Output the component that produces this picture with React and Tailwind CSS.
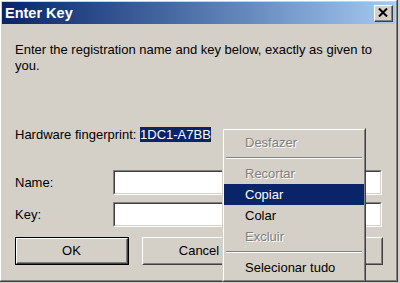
import React from "react";

const raisedBtn =
  "border-t border-l border-t-white border-l-white border-r border-b border-r-[#404040] border-b-[#404040]";

function Button({ children, def }) {
  if (def) {
    return (
      <div className="w-[114px] h-[28px] border border-black">
        <div className="w-full h-full border-t border-l border-t-white border-l-white border-r border-b border-r-[#404040] border-b-[#404040]">
          <div className="w-full h-full border-r border-b border-r-[#808080] border-b-[#808080] flex items-center justify-center text-[13px] text-black">
            {children}
          </div>
        </div>
      </div>
    );
  }
  return (
    <div className={"w-[114px] h-[28px] " + raisedBtn}>
      <div className="w-full h-full border-t border-l border-t-[#d4d0c8] border-l-[#d4d0c8] border-r border-b border-r-[#808080] border-b-[#808080] flex items-center justify-center text-[13px] text-black">
        {children}
      </div>
    </div>
  );
}

function Input() {
  return (
    <div className="w-[269px] h-[25px] border-t border-l border-t-[#808080] border-l-[#808080] border-r border-b border-r-white border-b-white">
      <div className="w-full h-full bg-white border-t border-l border-t-[#404040] border-l-[#404040] border-r border-b border-r-[#d4d0c8] border-b-[#d4d0c8]" />
    </div>
  );
}

function MenuItem({ label, disabled, active }) {
  let cls = "h-[21px] flex items-center pl-[21px] text-[13px] leading-none ";
  if (active) cls += "bg-[#0a246a] text-white";
  else if (disabled) cls += "text-[#808080] [text-shadow:1px_1px_0_#ffffff]";
  else cls += "text-black";
  return <div className={cls}>{label}</div>;
}

function Sep() {
  return (
    <div className="h-[10px] flex flex-col justify-center px-[2px]">
      <div className="h-px bg-[#808080]" />
      <div className="h-px bg-white" />
    </div>
  );
}

export default function App() {
  return (
    <div
      className="w-[400px] h-[283px] bg-[#d4d0c8] relative overflow-hidden"
      style={{ fontFamily: '"Liberation Sans", Arial, sans-serif' }}
    >
      <div className="w-[398px] h-[282px] border-r border-b border-r-[#404040] border-b-[#404040]">
        <div className="w-full h-full border-r border-b border-r-[#808080] border-b-[#808080] border-t border-l border-t-white border-l-white flex flex-col pt-px pl-px pr-px">
          {/* Title bar */}
          <div className="h-[22px] flex items-center justify-between bg-gradient-to-r from-[#0a246a] to-[#a6caf0] pl-[3px] pr-[2px]">
            <span className="text-white font-bold text-[14.5px] leading-none">
              Enter Key
            </span>
            <div className="w-[19px] h-[17px] border-t border-l border-t-white border-l-white border-r border-b border-r-[#404040] border-b-[#404040] bg-[#d4d0c8]">
              <div className="w-full h-full border-r border-b border-r-[#808080] border-b-[#808080] flex items-center justify-center">
                <svg width="10" height="9" viewBox="0 0 10 9">
                  <path d="M1 0.5 L9 8.5 M9 0.5 L1 8.5" stroke="#000" strokeWidth="2" />
                </svg>
              </div>
            </div>
          </div>

          {/* Content */}
          <div className="flex flex-col pl-[13px] text-[13px] text-black">
            <p className="mt-[18px] leading-[16px] w-[375px]">
              Enter the registration name and key below, exactly as given to you.
            </p>
            <p className="mt-[53px] leading-[16px] whitespace-nowrap">
              Hardware fingerprint:{" "}
              <span className="bg-[#0a246a] text-white">1DC1-A7BB</span>
            </p>
            <div className="mt-[27px] flex items-center">
              <span className="w-[98px]">Name:</span>
              <Input />
            </div>
            <div className="mt-[7px] flex items-center">
              <span className="w-[98px]">Key:</span>
              <Input />
            </div>
            <div className="mt-[10px] flex gap-[13px]">
              <Button def>OK</Button>
              <Button>Cancel</Button>
              <Button>Help</Button>
            </div>
          </div>
        </div>
      </div>

      {/* Context menu */}
      <div className="absolute left-[222px] top-[128px] w-[144px] h-[154px] border-t border-l border-t-[#d4d0c8] border-l-[#d4d0c8] border-r border-b border-r-[#404040] border-b-[#404040] bg-[#d4d0c8]">
        <div className="w-full h-full border-t border-l border-t-white border-l-white border-r border-b border-r-[#808080] border-b-[#808080] pt-[2px] flex flex-col">
          <MenuItem label="Desfazer" disabled />
          <Sep />
          <MenuItem label="Recortar" disabled />
          <MenuItem label="Copiar" active />
          <MenuItem label="Colar" />
          <MenuItem label="Excluir" disabled />
          <Sep />
          <MenuItem label="Selecionar tudo" />
        </div>
      </div>
    </div>
  );
}
